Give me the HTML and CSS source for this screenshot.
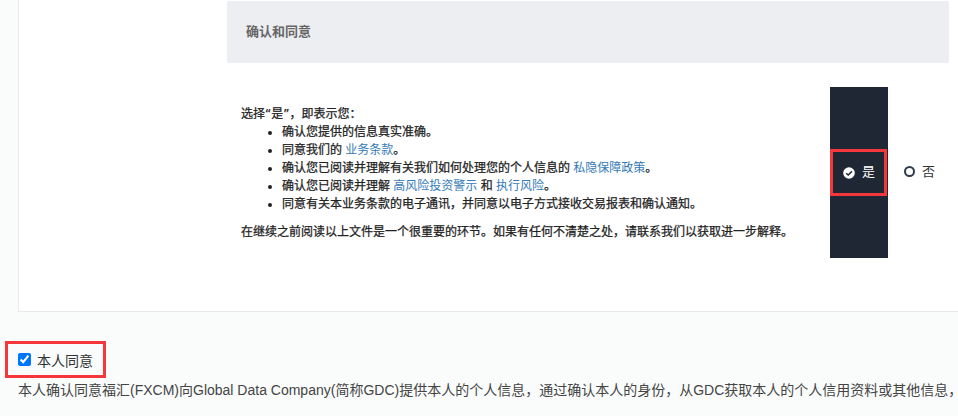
FILE: index.html
```html
<!DOCTYPE html>
<html lang="zh">
<head>
<meta charset="utf-8">
<title>确认和同意</title>
<link rel="stylesheet" href="styles.css">
</head>
<body>
<main class="page">
  <section class="card">
    <h2 class="band">确认和同意</h2>
    <div class="row">
      <div class="terms">
        <p class="lead">选择<span class="quote">“</span>是<span class="quote">”</span>，即表示您：</p>
        <ul class="list">
          <li>确认您提供的信息真实准确。</li>
          <li>同意我们的 <a href="#">业务条款</a>。</li>
          <li>确认您已阅读并理解有关我们如何处理您的个人信息的 <a href="#">私隐保障政策</a>。</li>
          <li>确认您已阅读并理解 <a href="#">高风险投资警示</a> 和 <a href="#">执行风险</a>。</li>
          <li>同意有关本业务条款的电子通讯，并同意以电子方式接收交易报表和确认通知。</li>
        </ul>
        <p class="note">在继续之前阅读以上文件是一个很重要的环节。如果有任何不清楚之处，请联系我们以获取进一步解释。</p>
      </div>
      <div class="choice-yes">
        <div class="yes-box">
          <svg class="check" viewBox="0 0 12 12" width="12" height="12"><circle cx="6" cy="6" r="5.8" fill="#fff"/><path d="M3.2 6.2 5.2 8 8.9 4.4" fill="none" stroke="#1e2733" stroke-width="1.5"/></svg>
          <span class="opt">是</span>
        </div>
      </div>
      <div class="choice-no">
        <span class="ring"></span>
        <span class="opt">否</span>
      </div>
    </div>
  </section>
  <label class="agree">
    <input type="checkbox" checked>
    <span>本人同意</span>
  </label>
  <p class="consent">本人确认同意福汇(FXCM)向Global Data Company(简称GDC)提供本人的个人信息，通过确认本人的身份，从GDC获取本人的个人信用资料或其他信息，</p>
</main>
</body>
</html>
```
FILE: styles.css
```css
html, body {
  margin: 0;
  padding: 0;
  height: 416px;
  overflow: hidden;
  background: #fafcfc;
}
body {
  font-family: "Liberation Sans", Arial, "Noto Sans CJK SC", sans-serif;
  color: #333;
}
.card {
  margin-left: 18px;
  height: 312px;
  box-sizing: border-box;
  background: #fff;
  border-left: 1px solid #e8eaec;
  border-bottom: 1px solid #e8eaec;
  padding: 1px 9px 0 208px;
}
.band {
  margin: 0;
  height: 62px;
  background: #edeef2;
  padding-left: 19px;
  font-size: 13px;
  font-weight: 700;
  line-height: 62px;
  color: #666;
}
.row {
  display: flex;
  margin-top: 24px;
  height: 171px;
}
.terms {
  width: 589px;
  padding: 18px 0 0 14px;
  font-size: 12px;
  line-height: 18px;
  color: #222;
  -webkit-text-stroke: 0.25px #222;
}
.quote {
  font-family: "DejaVu Sans", sans-serif;
}
.lead, .note {
  margin: 0;
}
.list {
  margin: 0 0 10px;
  padding-left: 41px;
}
.terms a {
  color: #337ab7;
  text-decoration: none;
  -webkit-text-stroke: 0;
}
.choice-yes {
  width: 58px;
  background: #1e2733;
  display: flex;
  align-items: center;
}
.yes-box {
  width: 57px;
  height: 47px;
  box-sizing: border-box;
  border: 3px solid #f5363b;
  display: flex;
  align-items: center;
  padding-left: 10px;
  gap: 7px;
  font-size: 13px;
  color: #fff;
}
.opt {
  position: relative;
  top: -2px;
}
.choice-no {
  display: flex;
  align-items: center;
  padding-left: 16px;
  gap: 7px;
  font-size: 13px;
  color: #333;
}
.ring {
  width: 11px;
  height: 11px;
  box-sizing: border-box;
  border: 2px solid #2f3b4a;
  border-radius: 50%;
  position: relative;
  top: -1px;
}
.agree {
  display: flex;
  width: 101px;
  height: 37px;
  box-sizing: border-box;
  margin: 29px 0 0 5px;
  border: 3px solid #f5363b;
  align-items: center;
  padding-left: 10px;
  gap: 6px;
  font-size: 14px;
  color: #333;
}
.agree input {
  margin: 0;
  width: 13px;
  height: 13px;
}
.consent {
  margin: 2px 0 0 18px;
  font-size: 14px;
  line-height: 20px;
  color: #444;
  white-space: nowrap;
}
```
